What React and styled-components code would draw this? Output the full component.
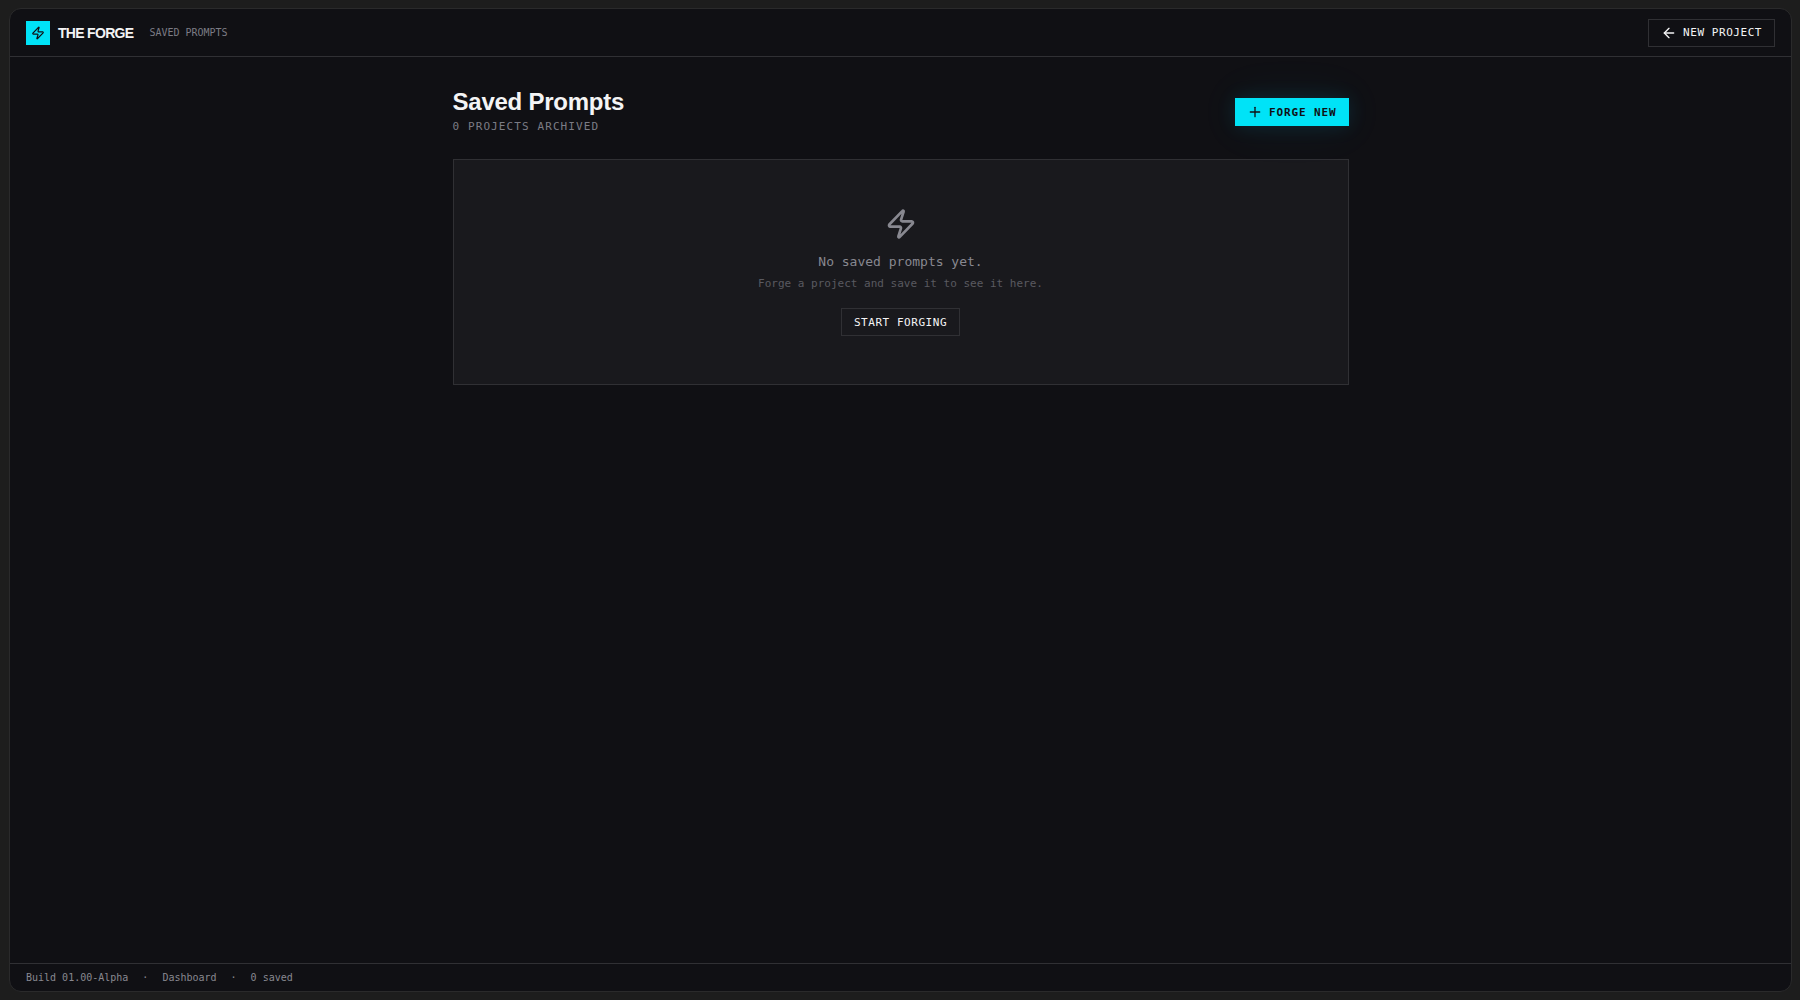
import React from 'react'
import styled, { createGlobalStyle } from 'styled-components'
import { ArrowLeft, Plus, Zap } from 'lucide-react'

function App() {
  return (
    <>
      <GlobalStyle />
      <Window>
        <TopBar>
          <Brand>
            <Logo><Zap size={14} /></Logo>
            <Name>The Forge</Name>
            <Section>Saved Prompts</Section>
          </Brand>
          <Button><ArrowLeft size={16} />New Project</Button>
        </TopBar>
        <Main>
          <Content>
            <Heading>
              <div>
                <Title>Saved Prompts</Title>
                <Count>0 projects archived</Count>
              </div>
              <PrimaryButton><Plus size={16} />Forge New</PrimaryButton>
            </Heading>
            <EmptyCard>
              <Zap size={32} />
              <EmptyTitle>No saved prompts yet.</EmptyTitle>
              <EmptyHint>Forge a project and save it to see it here.</EmptyHint>
              <Button>Start Forging</Button>
            </EmptyCard>
          </Content>
        </Main>
        <StatusBar>
          <span>Build 01.00-Alpha</span>
          <span>·</span>
          <span>Dashboard</span>
          <span>·</span>
          <span>0 saved</span>
        </StatusBar>
      </Window>
    </>
  )
}

export default App

const mono = '"DejaVu Sans Mono", monospace'
const sans = '"Liberation Sans", Arial, sans-serif'

const GlobalStyle = createGlobalStyle`
  * {
    box-sizing: border-box;
  }

  body {
    margin: 0;
    background-color: #1d1d1d;
    color: #f4f4f5;
    font-family: ${mono};
    -webkit-font-smoothing: antialiased;
  }

  h1, p {
    margin: 0;
  }
`

const Window = styled.div`
  display: flex;
  flex-direction: column;
  height: calc(100vh - 16px);
  margin: 8px 8px 8px 9px;
  background-color: #101014;
  border: 1px solid #2a2a2b;
  border-radius: 12px;
  overflow: hidden;
`

const TopBar = styled.header`
  display: flex;
  align-items: center;
  justify-content: space-between;
  height: 48px;
  padding: 0 16px;
  border-bottom: 1px solid #303034;
`

const Brand = styled.div`
  display: flex;
  align-items: center;
`

const Logo = styled.div`
  display: flex;
  align-items: center;
  justify-content: center;
  width: 24px;
  height: 24px;
  margin-right: 8px;
  background-color: #00e3f7;
  color: #101014;
`

const Name = styled.span`
  margin-right: 16px;
  font-family: ${sans};
  font-size: 14px;
  font-weight: 700;
  letter-spacing: -0.05em;
  text-transform: uppercase;
`

const Section = styled.span`
  color: #7c7c85;
  font-size: 10px;
  text-transform: uppercase;
`

const Button = styled.button`
  display: inline-flex;
  align-items: center;
  justify-content: center;
  gap: 6px;
  height: 28px;
  padding: 0 12px;
  background-color: transparent;
  border: 1px solid #303034;
  color: #f4f4f5;
  font-family: ${mono};
  font-size: 11px;
  letter-spacing: 0.05em;
  text-transform: uppercase;
  cursor: pointer;
`

const PrimaryButton = styled(Button)`
  background-color: #00e3f7;
  border: none;
  box-shadow: 0 0 20px rgba(0, 200, 247, 0.12), 0 0 48px rgba(0, 200, 247, 0.07);
  color: #101014;
  font-weight: 700;
  letter-spacing: 0.08em;
`

const Main = styled.main`
  flex: 1;
  padding: 32px;
  overflow: auto;
`

const Content = styled.div`
  max-width: 896px;
  margin: 0 auto;
`

const Heading = styled.div`
  display: flex;
  align-items: center;
  justify-content: space-between;
  margin-bottom: 24px;
`

const Title = styled.h1`
  font-family: ${sans};
  font-size: 24px;
  font-weight: 700;
  letter-spacing: -0.01em;
  line-height: 26px;
`

const Count = styled.p`
  margin-top: 4px;
  color: #7c7c85;
  font-size: 11px;
  letter-spacing: 0.1em;
  line-height: 16px;
  text-transform: uppercase;
`

const EmptyCard = styled.section`
  display: flex;
  flex-direction: column;
  align-items: center;
  padding: 48px;
  background-color: #19191d;
  border: 1px solid #303034;
  color: #888890;
`

const EmptyTitle = styled.p`
  margin-top: 12px;
  font-size: 13px;
  line-height: 20px;
`

const EmptyHint = styled.p`
  margin: 4px 0 16px;
  color: #5a5a60;
  font-size: 11px;
  line-height: 16px;
`

const StatusBar = styled.footer`
  display: flex;
  align-items: center;
  gap: 14px;
  height: 28px;
  padding: 0 16px;
  border-top: 1px solid #303034;
  color: #888890;
  font-size: 10px;
`
